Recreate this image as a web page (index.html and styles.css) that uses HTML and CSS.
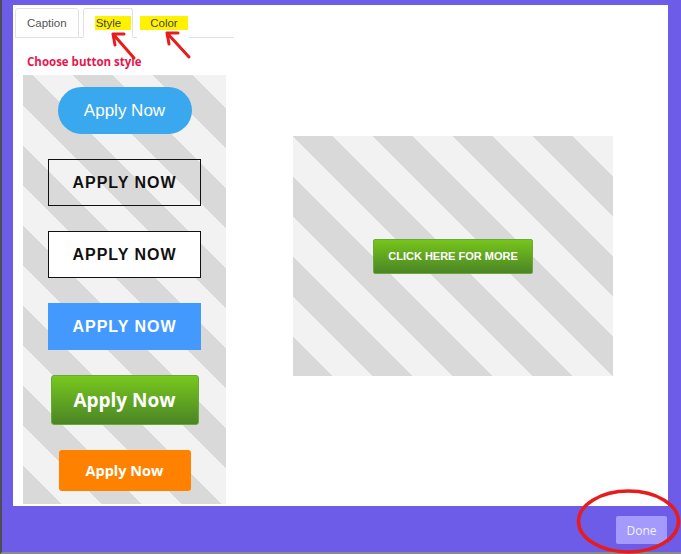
FILE: index.html
```html
<!DOCTYPE html>
<html lang="en">
<head>
    <meta charset="UTF-8">
    <meta name="viewport" content="width=device-width, initial-scale=1.0">
    <title>Button Style</title>
    <link rel="stylesheet" href="styles.css">
</head>
<body>
    <div class="frame">
        <div class="panel">
            <div class="sidebar">
                <div class="tabs">
                    <div class="tab">Caption</div>
                    <div class="tab active"><span class="mark">Style</span></div>
                    <div class="tab plain"><span class="mark">Color</span></div>
                </div>
                <div class="label">Choose button style</div>
                <div class="styles stripes">
                    <div class="btn pill">Apply Now</div>
                    <div class="btn outline">APPLY NOW</div>
                    <div class="btn outline white">APPLY NOW</div>
                    <div class="btn flat">APPLY NOW</div>
                    <div class="btn green">Apply Now</div>
                    <div class="btn orange">Apply Now</div>
                </div>
            </div>
            <div class="preview-area">
                <div class="preview stripes">
                    <div class="cta">CLICK HERE FOR MORE</div>
                </div>
            </div>
        </div>
        <div class="footer">
            <button class="done">Done</button>
        </div>

        <svg class="marks" width="681" height="554" viewBox="0 0 681 554">
            <g fill="none" stroke="#e81c1c" stroke-width="3" stroke-linecap="round" stroke-linejoin="round">
                <path d="M134 58 L113 34 M113 34 L124 34 M113 34 L115 45"/>
                <path d="M189 57 L167 33 M167 33 L178 33 M167 33 L169 44"/>
                <ellipse cx="628.5" cy="521.5" rx="50" ry="30.5" stroke-width="3.5"/>
            </g>
        </svg>
    </div>
</body>
</html>
```

FILE: styles.css
```css
body {
    margin: 0;
    font-family: "Liberation Sans", Arial, sans-serif;
}
.frame {
    position: relative;
    width: 681px;
    height: 554px;
    box-sizing: border-box;
    background: #6c5ce7;
    border-left: 2px solid #4d4d55;
    border-bottom: 2px solid #8a8a8a;
    padding: 5px 13px 0 11px;
}
.panel {
    background: #fff;
    height: 501px;
    display: flex;
}
.sidebar {
    width: 221px;
    padding: 3px 0 0 2px;
}
.tabs {
    display: flex;
    gap: 4px;
    height: 29px;
    margin-right: 2px;
    border-bottom: 1px solid #e2e2e2;
}
.tab {
    box-sizing: border-box;
    height: 30px;
    padding: 0 11px;
    display: flex;
    align-items: center;
    font-size: 11.5px;
    color: #555;
    border: 1px solid #e2e2e2;
    border-radius: 3px 3px 0 0;
    background: #fff;
}
.tab.active {
    border-bottom-color: #fff;
    padding: 0 1px 0 11px;
}
.tab.plain {
    border-color: transparent;
    padding: 0 0 0 2px;
}
.mark {
    background: #fff200;
    color: #444;
    padding: 1px 10px 1px 1px;
}
.tab.plain .mark {
    padding: 1px 10px;
}
.label {
    margin: 16px 0 0 12px;
    height: 21px;
    font-family: "Open Sans", sans-serif;
    font-weight: 700;
    font-size: 11.5px;
    color: #e5174e;
}
.stripes {
    background: repeating-linear-gradient(45deg,
        #d9d9d9 0, #d9d9d9 22px,
        #f2f2f2 22px, #f2f2f2 50.3px,
        #d9d9d9 50.3px, #d9d9d9 56.57px) fixed;
}
.styles {
    margin-left: 8px;
    width: 203px;
    height: 429px;
    box-sizing: border-box;
    padding-top: 12px;
    display: flex;
    flex-direction: column;
    align-items: center;
    gap: 25px;
}
.btn {
    display: flex;
    align-items: center;
    justify-content: center;
    box-sizing: border-box;
    width: 153px;
    height: 47px;
}
.pill {
    width: 134px;
    background: #3aa8ee;
    border-radius: 24px;
    color: #fff;
    font-size: 17px;
}
.outline {
    border: 1px solid #111;
    font-weight: 700;
    font-size: 16px;
    letter-spacing: 1px;
    color: #111;
}
.outline.white {
    background: #fff;
}
.flat {
    background: #4499fe;
    color: #fff;
    font-weight: 700;
    font-size: 16px;
    letter-spacing: 1px;
}
.green {
    width: 148px;
    height: 50px;
    border: 1px solid #6aa838;
    border-radius: 3px;
    background: linear-gradient(#78c81e, #4b8526);
    color: #fff;
    font-family: "Open Sans", sans-serif;
    font-weight: 700;
    font-size: 19px;
}
.orange {
    width: 132px;
    height: 41px;
    border-radius: 3px;
    background: #ff8100;
    color: #fff;
    font-family: "Open Sans", sans-serif;
    font-weight: 700;
    font-size: 14.5px;
}
.preview-area {
    flex: 1;
    display: flex;
    align-items: center;
    justify-content: center;
    padding-left: 2px;
}
.preview {
    width: 320px;
    height: 240px;
    display: flex;
    align-items: center;
    justify-content: center;
    padding-top: 1px;
    box-sizing: border-box;
}
.cta {
    box-sizing: border-box;
    width: 160px;
    height: 35px;
    display: flex;
    align-items: center;
    justify-content: center;
    border: 1px solid #6aa838;
    border-radius: 2px;
    background: linear-gradient(#76c51c, #4b8526);
    color: #fff;
    font-weight: 700;
    font-size: 11px;
}
.footer {
    display: flex;
    justify-content: flex-end;
    padding: 10px 1px 0 0;
}
.done {
    width: 51px;
    height: 28px;
    border: none;
    border-radius: 2px;
    background: #a39afc;
    color: #f4f2ff;
    font-family: "Open Sans", sans-serif;
    font-size: 12px;
    padding: 0;
}
.marks {
    position: absolute;
    left: -2px;
    top: 0;
    pointer-events: none;
}
```
